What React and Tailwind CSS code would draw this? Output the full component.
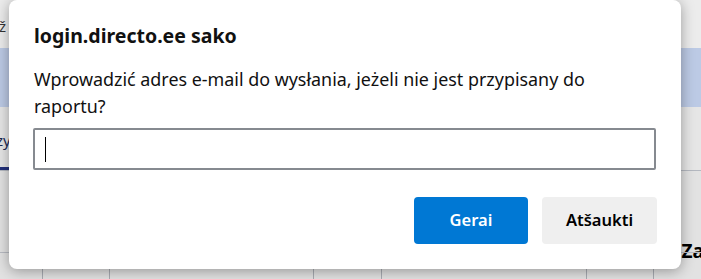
export default function App() {
  return (
    <div className="relative w-[701px] h-[279px] overflow-hidden bg-[#e3e3e3]" style={{ fontFamily: '"Noto Sans", "Open Sans", sans-serif' }}>
      {/* dimmed page behind */}
      <div className="flex flex-col w-full h-full">
        <div className="h-[48px] bg-[#ececec] flex items-center text-[15px] text-black/80">
          <span className="-ml-[1px] mt-[4px]">ž</span>
        </div>
        <div className="h-[59px] bg-[#bccae5]" />
        <div className="h-[63px] bg-[#e6e6e6] flex flex-col justify-between">
          <span className="text-[15px] text-[#1b2a55] -ml-[4px] mt-[22px]">zy</span>
          <div className="h-[3px] w-[9px] bg-[#22307a]" />
        </div>
        <div className="h-px bg-[#b4b8c0]" />
        <div className="flex-1 bg-[#e2e2e2]">
          <div className="flex items-end justify-end h-full pb-[14px]">
            <span className="text-[19px] font-bold text-black -mr-[3px]">Za</span>
          </div>
        </div>
      </div>
      {/* bottom column lines */}
      <div className="absolute left-0 right-0 top-[252px] h-px bg-[#b8bbc2]" />
      <div className="absolute bottom-0 left-[42px] w-px h-[10px] bg-[#a8abb2]" />
      <div className="absolute bottom-0 left-[109px] w-px h-[10px] bg-[#a8abb2]" />
      <div className="absolute bottom-0 left-[313px] w-px h-[10px] bg-[#a8abb2]" />
      <div className="absolute bottom-0 left-[381px] w-px h-[10px] bg-[#a8abb2]" />
      <div className="absolute bottom-0 left-[586px] w-px h-[10px] bg-[#a8abb2]" />
      <div className="absolute bottom-0 left-[653px] w-px h-[10px] bg-[#a8abb2]" />

      {/* dialog */}
      <div className="absolute left-[9px] top-0 w-[672px] h-[269px] bg-white rounded-[8px] shadow-[0_2px_14px_rgba(0,0,0,0.35)] px-[24px] flex flex-col">
        <div className="ml-px mt-[24px] text-[19.5px] leading-[24px] font-bold text-[#111]">login.directo.ee sako</div>
        <div className="ml-px mt-[18px] w-[590px] text-[17.9px] leading-[27px] text-[#111]">
          Wprowadzić adres e-mail do wysłania, jeżeli nie jest przypisany do raportu?
        </div>
        <div className="mt-[8px] h-[42px] w-[623px] border-2 border-[#868a90] rounded-[2px] flex items-center pl-[10px]">
          <div className="w-px h-[25px] bg-black" />
        </div>
        <div className="flex justify-end gap-[14px] mt-[27px]">
          <div className="w-[114px] h-[47px] rounded-[4px] bg-[#0078d4] text-white text-[16.5px] font-semibold flex items-center justify-center">Gerai</div>
          <div className="w-[115px] h-[47px] rounded-[4px] bg-[#efefef] text-black text-[16.5px] font-semibold flex items-center justify-center">Atšaukti</div>
        </div>
      </div>
    </div>
  );
}
